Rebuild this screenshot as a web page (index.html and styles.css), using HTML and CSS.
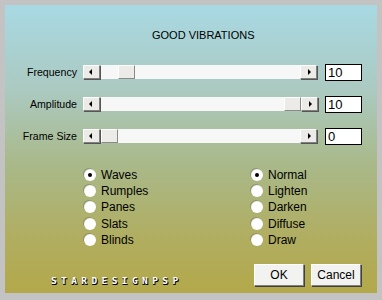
FILE: index.html
```html
<!DOCTYPE html>
<html>
<head>
<meta charset="utf-8">
<link rel="stylesheet" href="styles.css">
</head>
<body>
<div class="frame">
  <div class="panel">
    <div class="title">GOOD VIBRATIONS</div>
    <div class="sliders">
      <div class="row">
        <span class="label">Frequency</span>
        <div class="scroll">
          <span class="btn"><span class="arrow left"></span></span>
          <span class="track"><span class="thumb" style="margin-left:17px"></span></span>
          <span class="btn"><span class="arrow right"></span></span>
        </div>
        <span class="input">10</span>
      </div>
      <div class="row">
        <span class="label">Amplitude</span>
        <div class="scroll">
          <span class="btn"><span class="arrow left"></span></span>
          <span class="track"><span class="thumb" style="margin-left:183px"></span></span>
          <span class="btn"><span class="arrow right"></span></span>
        </div>
        <span class="input">10</span>
      </div>
      <div class="row">
        <span class="label">Frame Size</span>
        <div class="scroll">
          <span class="btn"><span class="arrow left"></span></span>
          <span class="track"><span class="thumb" style="margin-left:0px"></span></span>
          <span class="btn"><span class="arrow right"></span></span>
        </div>
        <span class="input">0</span>
      </div>
    </div>
    <div class="radios">
      <div class="col">
        <div class="radio"><span class="dot on"></span>Waves</div>
        <div class="radio"><span class="dot"></span>Rumples</div>
        <div class="radio"><span class="dot"></span>Panes</div>
        <div class="radio"><span class="dot"></span>Slats</div>
        <div class="radio"><span class="dot"></span>Blinds</div>
      </div>
      <div class="col">
        <div class="radio"><span class="dot on"></span>Normal</div>
        <div class="radio"><span class="dot"></span>Lighten</div>
        <div class="radio"><span class="dot"></span>Darken</div>
        <div class="radio"><span class="dot"></span>Diffuse</div>
        <div class="radio"><span class="dot"></span>Draw</div>
      </div>
    </div>
    <div class="footer">
      <span class="logo">STARDESIGNPSP</span>
      <div class="buttons">
        <span class="button">OK</span>
        <span class="button">Cancel</span>
      </div>
    </div>
  </div>
</div>
</body>
</html>
```
FILE: styles.css
```css
html, body {
  margin: 0;
  padding: 0;
  background: #c3c3c3;
}
.frame {
  width: 382px;
  height: 300px;
  padding: 5px 5px 7px 5px;
  box-sizing: border-box;
  background: #c3c3c3;
}
.panel {
  width: 372px;
  height: 288px;
  box-sizing: border-box;
  background: linear-gradient(to bottom, #a8d9e3 0%, #abc9c0 30%, #a9b98a 55%, #b0ae62 80%, #b3a84a 100%);
  font-family: "Liberation Sans", Arial, sans-serif;
  font-size: 11px;
  color: #000;
  padding-top: 24px;
}
.title {
  padding-left: 147px;
  line-height: 13px;
  height: 13px;
}
.sliders {
  margin-top: 22px;
  display: flex;
  flex-direction: column;
  gap: 16px;
}
.row {
  display: flex;
  align-items: center;
  height: 16px;
}
.label {
  width: 72px;
  text-align: right;
  margin-right: 6px;
  line-height: 13px;
  font-size: 10.6px;
}
.scroll {
  display: flex;
  width: 234px;
  height: 14px;
  margin-right: 8px;
}
.btn, .thumb {
  width: 17px;
  height: 14px;
  box-sizing: border-box;
  background: #ecebe7;
  border-top: 1px solid #fff;
  border-left: 1px solid #fff;
  border-right: 1px solid #808080;
  border-bottom: 1px solid #808080;
  box-shadow: 1px 1px 0 #555;
  display: flex;
  align-items: center;
  justify-content: center;
  flex: none;
}
.thumb {
  display: block;
  box-shadow: none;
  border-right-color: #8a8a8a;
  border-bottom-color: #8a8a8a;
}
.track {
  flex: 1;
  height: 14px;
  background: #f7f7f7;
  display: flex;
  margin-left: 1px;
}
.arrow {
  width: 0;
  height: 0;
  border-top: 3px solid transparent;
  border-bottom: 3px solid transparent;
}
.arrow.left { border-right: 3px solid #000; margin-right: 2px; }
.arrow.right { border-left: 3px solid #000; margin-left: 1px; }
.input {
  width: 37px;
  height: 17px;
  box-sizing: border-box;
  border: 1px solid #000;
  background: #fff;
  font-size: 13px;
  line-height: 15px;
  padding-left: 2px;
}
.radios {
  display: flex;
  margin-top: 23px;
  padding-left: 79px;
}
.col {
  width: 167px;
  flex: none;
  display: flex;
  flex-direction: column;
}
.col + .col {
  width: auto;
}
.radio {
  display: flex;
  align-items: center;
  height: 16.2px;
  font-size: 12px;
}
.dot {
  width: 12px;
  height: 12px;
  border-radius: 50%;
  background: radial-gradient(circle at 55% 55%, #fff 55%, #e6e6e6 80%, #cfcfcf 100%);
  box-shadow: -1px -1px 0 rgba(120,120,110,0.5);
  margin-right: 5px;
  position: relative;
  flex: none;
}
.dot.on::after {
  content: "";
  position: absolute;
  left: 4px;
  top: 4px;
  width: 4px;
  height: 4px;
  border-radius: 50%;
  background: #000;
}
.footer {
  display: flex;
  align-items: flex-end;
  justify-content: space-between;
  margin-top: 16px;
  padding-left: 46px;
  padding-right: 16px;
}
.logo {
  font-family: "DejaVu Sans Mono", monospace;
  font-weight: bold;
  font-size: 9.5px;
  letter-spacing: 4.4px;
  color: #fff;
  text-shadow: 1px 1px 0 #000, 0 1px 0 #000;
  line-height: 8px;
  margin-bottom: 1px;
}
.buttons {
  display: flex;
  gap: 7px;
}
.button {
  width: 50px;
  height: 22px;
  box-sizing: border-box;
  background: #f2f2f0;
  border-top: 1px solid #fff;
  border-left: 1px solid #fff;
  border-right: 1px solid #808080;
  border-bottom: 1px solid #808080;
  box-shadow: 1px 1px 0 #404040;
  display: flex;
  align-items: center;
  justify-content: center;
  font-size: 12px;
}
```
